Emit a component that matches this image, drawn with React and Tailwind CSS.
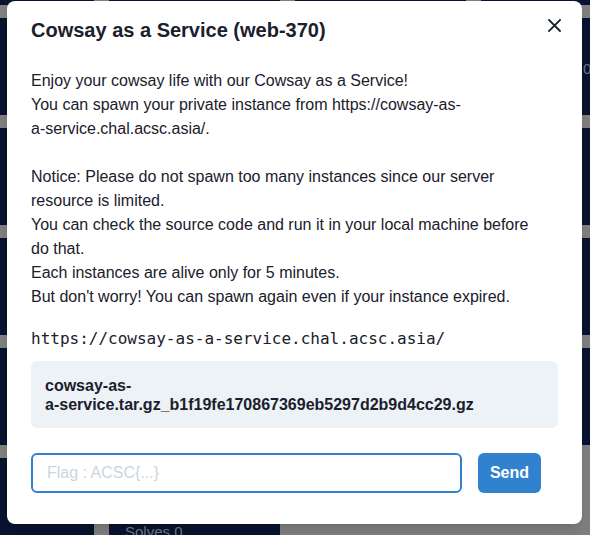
import React from 'react';

const rows = [
  { cards: 4 },
  { cards: 4, left: ['s', '0'], right: '0' },
  { cards: 4, left: ['Op', '1 a'] },
  { cards: 4, left: ['ot', '1 C'] },
  { cards: 4, left: ['Op', '5'] },
  { cards: 2, left: ['ot', ''], solves: true },
];

const Backdrop = () => (
  <div className="flex flex-col gap-[13px] -mt-[92px] -ml-[77px] text-[15px] leading-5 text-[#6f7787]">
    {rows.map((row, i) => (
      <div key={i} className="flex gap-[15px]">
        {Array.from({ length: row.cards }).map((_, j) => (
          <div key={j} className="w-[171px] h-[97px] shrink-0 bg-[#08142f] pt-[38px]">
            {j === 0 && row.left && (
              <div className="flex flex-col items-end pr-[2px]">
                <span>{row.left[0]}</span>
                <span>{row.left[1]}</span>
              </div>
            )}
            {j === 1 && row.solves && <div className="pl-[16px] pt-[26px]">Solves 0</div>}
            {j === 3 && row.right && <div className="pl-[102px] pt-[3px]">{row.right}</div>}
          </div>
        ))}
      </div>
    ))}
  </div>
);

const App = () => {
  return (
    <div
      className="relative w-[590px] h-[535px] overflow-hidden bg-[#7f7f7f]"
      style={{ fontFamily: '"Liberation Sans", Arial, sans-serif' }}
    >
      <Backdrop />

      {/* modal */}
      <div className="absolute inset-0 flex items-start pt-px pl-[7px]">
        <div className="relative w-[575px] bg-white rounded-lg shadow-lg text-[#1a202c] pb-[31px]">
          <header className="px-6 py-4 text-[20px] leading-[27px] font-bold">
            Cowsay as a Service (web-370)
          </header>
          <button className="absolute top-2 right-3 w-8 h-8 flex items-center justify-center rounded-md">
            <svg width="13" height="13" viewBox="0 0 13 13" fill="none" stroke="#1a202c" strokeWidth="1.8" strokeLinecap="square">
              <path d="M1 1L12 12M12 1L1 12" />
            </svg>
          </button>

          <div className="px-6 pt-[9px] text-[16px]">
            <div className="w-[510px] leading-6">
              <p>Enjoy your cowsay life with our Cowsay as a Service!</p>
              <p>
                You can spawn your private instance from https://cowsay-as-
                <span className="whitespace-nowrap">a-service.chal.acsc.asia/.</span>
              </p>
              <p className="mt-6">
                Notice: Please do not spawn too many instances since our server resource is limited.
              </p>
              <p>You can check the source code and run it in your local machine before do that.</p>
              <p>Each instances are alive only for 5 minutes.</p>
              <p>But don't worry! You can spawn again even if your instance expired.</p>
            </div>

            <div
              className="mt-[18px] leading-6"
              style={{ fontFamily: '"DejaVu Sans Mono", monospace' }}
            >
              https://cowsay-as-a-service.chal.acsc.asia/
            </div>

            <div className="mt-[10px] rounded-md bg-[#edf2f7] px-[14px] pt-[15px] pb-[14px] font-bold leading-[1.2]">
              cowsay-as-
              <br />
              a-service.tar.gz_b1f19fe170867369eb5297d2b9d4cc29.gz
            </div>

            <div className="mt-[25px] flex">
              <input
                className="w-[431px] h-10 border-2 border-[#3182ce] rounded-md px-[14px] text-[16px] outline-none placeholder:text-[#cdd5e0]"
                placeholder="Flag : ACSC{...}"
              />
              <button className="ml-4 w-[63px] h-10 rounded-md bg-[#3182ce] text-white font-bold text-[16px]">
                Send
              </button>
            </div>
          </div>
        </div>
      </div>
    </div>
  );
};

export default App;
